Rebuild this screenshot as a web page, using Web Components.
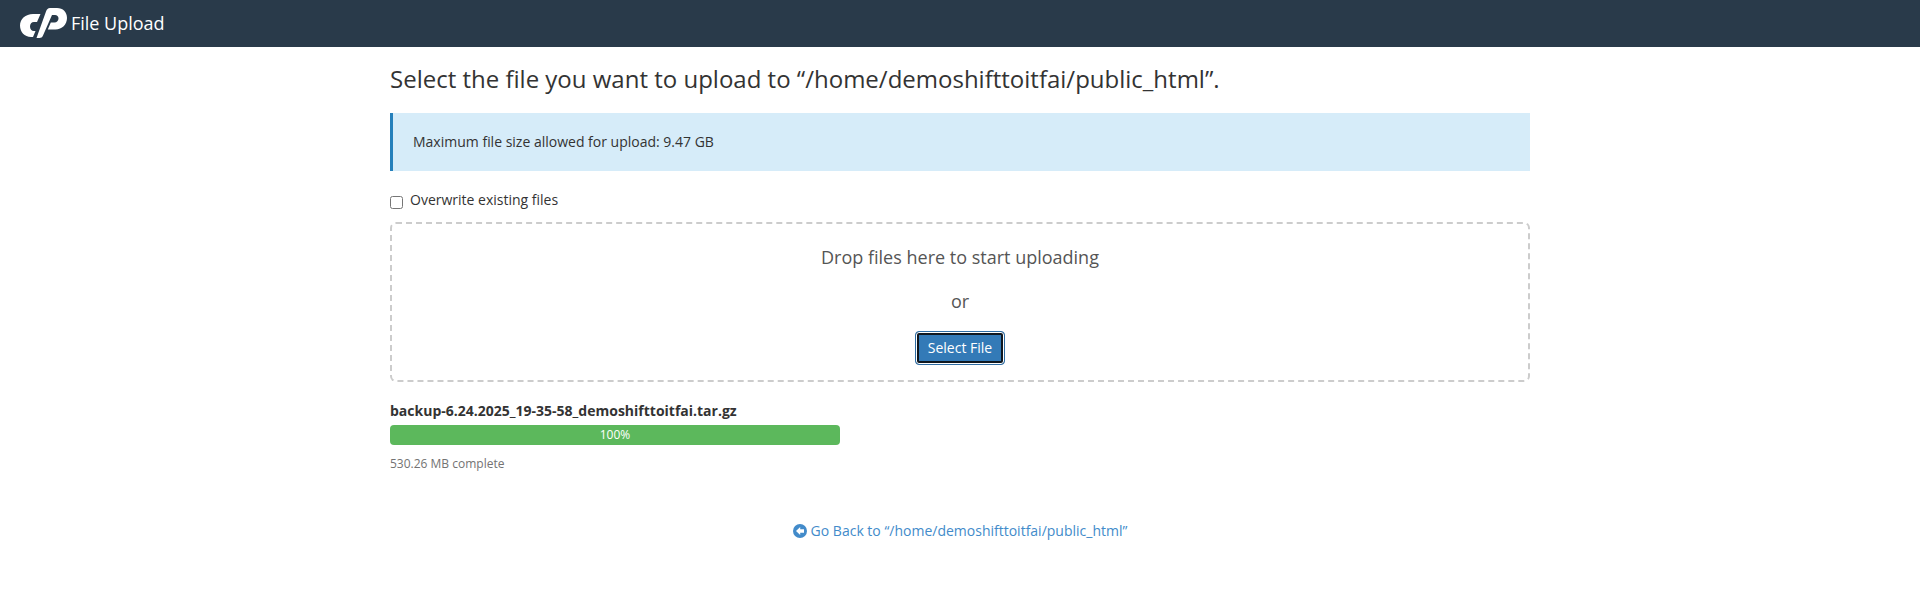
<!DOCTYPE html>
<html><head><meta charset="utf-8">
<style>
html,body{margin:0;padding:0;background:#fff;font-family:"Open Sans",sans-serif;font-size:14px;line-height:20px;color:#333}
</style></head><body>
<app-header>File Upload</app-header>
<app-page>
  <page-title>Select the file you want to upload to “/home/demoshifttoitfai/public_html”.</page-title>
  <info-alert>Maximum file size allowed for upload: 9.47 GB</info-alert>
  <check-row>Overwrite existing files</check-row>
  <drop-zone></drop-zone>
  <upload-item name="backup-6.24.2025_19-35-58_demoshifttoitfai.tar.gz" pct="100%" status="530.26 MB complete"></upload-item>
  <back-link>Go Back to “/home/demoshifttoitfai/public_html”</back-link>
</app-page>
<script>
function def(name,html,init){
  customElements.define(name,class extends HTMLElement{
    constructor(){super();this.attachShadow({mode:'open'}).innerHTML=html;}
    connectedCallback(){if(init)init(this);}
  });
}
def('app-header',`<style>:host{display:flex;align-items:center;height:47px;background:#293a4a;color:#fff;padding-left:20px;box-sizing:border-box}
svg{display:block;width:47px;height:31px;flex:none}
span{font-size:18px;line-height:25px;margin-left:4px;letter-spacing:-.02px}</style>
<svg viewBox="20 8 47 31"><path fill="#fff" d="M33 14H40.500L37 22H34C31.500 22 30 24 30 26.500C30 29 31.500 31 34 31H35.500L33 37H31C24.500 37 20 32 20 25.500C20 19 25.500 14 33 14Z"/><path fill="#fff" d="M50 8H57C63 8 67 12 67 18C67 24.500 62 29.500 55.500 29.500H47.800L50.800 22.500H54.500C56.800 22.500 58.500 20.500 58.500 18.500C58.500 16.500 57 15 55 15H52L43 35.500C42.200 37.300 41 38 39.500 38H36.500L46 11.500C46.800 9.300 48 8 50 8Z"/></svg><span><slot></slot></span>`);
def('app-page',`<style>:host{display:block;width:1140px;margin:0 auto}</style><slot></slot>`);
def('page-title',`<style>:host{display:block;font-size:24px;line-height:33px;color:#333;padding-top:15px;margin-bottom:18px}</style><slot></slot>`);
def('info-alert',`<style>:host{display:block;background:#d6ecf9;border-left:3px solid #2580bb;padding:19px 20px;height:20px;line-height:20px;color:#333;font-size:14px}</style><slot></slot>`);
def('check-row',`<style>:host{display:flex;align-items:flex-start;margin-top:19px;height:32px;font-size:14px;line-height:20px}
input{width:13px;height:13px;margin:6px 7px 0 0;flex:none}</style><input type="checkbox"><slot></slot>`);
def('drop-zone',`<style>:host{display:flex;flex-direction:column;align-items:center;box-sizing:border-box;height:160px;border:2px dashed #ccc;border-radius:6px;color:#555;font-size:18px;line-height:25px;padding-top:21px}
.or{margin-top:19px}
button{margin-top:17px;font:14px/20px "Open Sans",sans-serif;color:#fff;background:#337ab7;border:1px solid #2e6da4;border-radius:4px;padding:0;width:90px;box-sizing:border-box;height:34px;box-shadow:inset 0 0 0 1px #fff,inset 0 0 0 3px #101820}
</style><div>Drop files here to start uploading</div><div class="or">or</div><button>Select File</button>`);
def('upload-item',`<style>:host{display:block;margin-top:19px;font-size:14px}
.n{font-weight:700;line-height:20px;color:#333}
.bar{width:450px;height:20px;border-radius:4px;background:#5cb85c;color:#fff;font-size:12px;line-height:20px;text-align:center;margin-top:4px}
.s{font-size:12px;line-height:17px;color:#737373;margin-top:10px}</style>
<div class="n"></div><div class="bar"></div><div class="s"></div>`,el=>{
  const r=el.shadowRoot;r.querySelector('.n').textContent=el.getAttribute('name');r.querySelector('.bar').textContent=el.getAttribute('pct');r.querySelector('.s').textContent=el.getAttribute('status');});
def('back-link',`<style>:host{display:flex;justify-content:center;align-items:center;margin-top:49px;color:#428bca;font-size:14px;line-height:20px}
svg{width:14px;height:14px;margin-right:4px;flex:none}</style>
<svg viewBox="0 0 14 14"><circle cx="7" cy="7" r="7" fill="#428bca"/><path fill="#fff" d="M7.200 2.900 3 7l4.200 4.100V8.700H11V5.300H7.200Z"/></svg><slot></slot>`);
</script>
</body></html>
